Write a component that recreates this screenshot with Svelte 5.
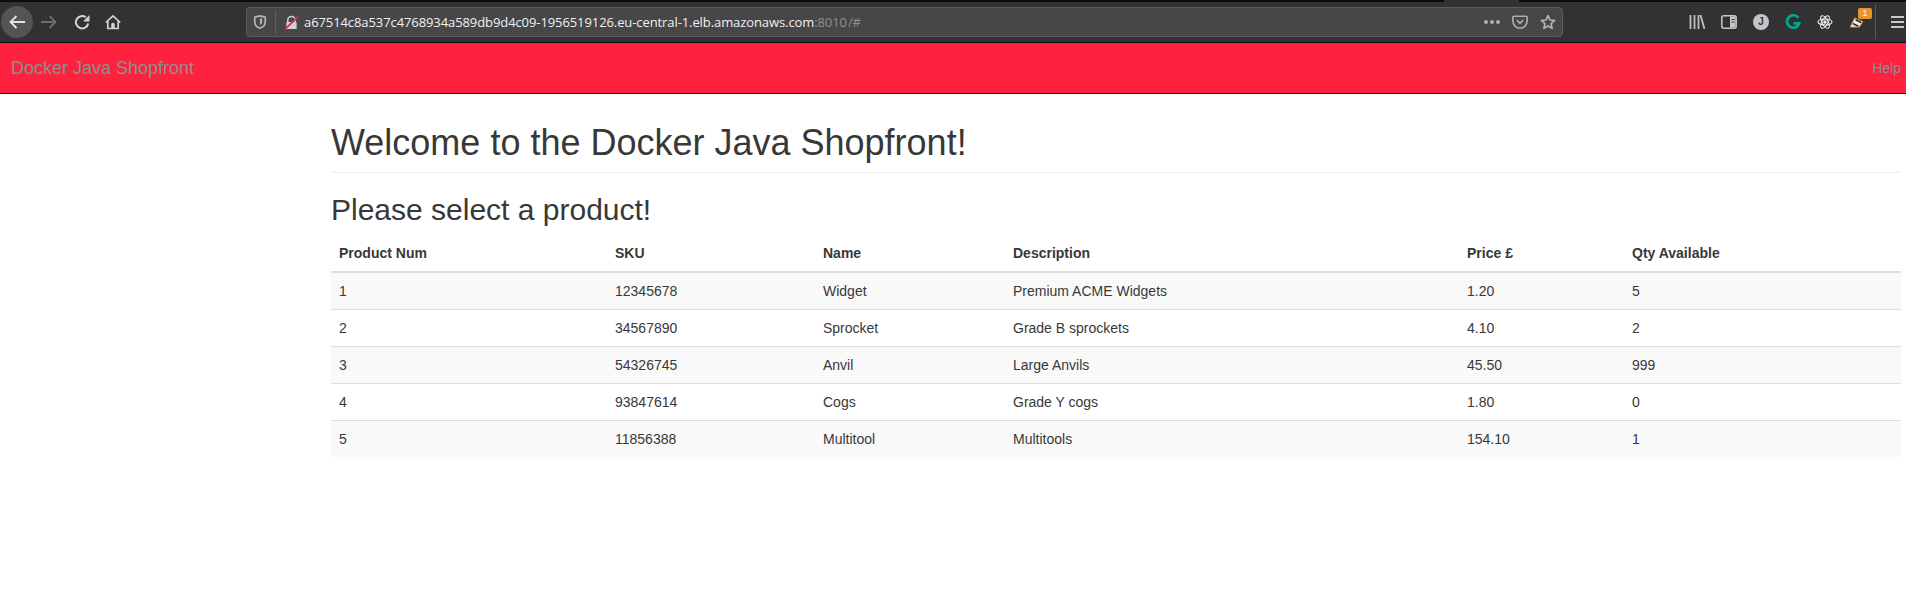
<script>
	const columns = ['Product Num', 'SKU', 'Name', 'Description', 'Price £', 'Qty Available'];
	const products = [
		['1', '12345678', 'Widget', 'Premium ACME Widgets', '1.20', '5'],
		['2', '34567890', 'Sprocket', 'Grade B sprockets', '4.10', '2'],
		['3', '54326745', 'Anvil', 'Large Anvils', '45.50', '999'],
		['4', '93847614', 'Cogs', 'Grade Y cogs', '1.80', '0'],
		['5', '11856388', 'Multitool', 'Multitools', '154.10', '1']
	];
</script>

<div class="toolbar">
	<span class="tab-stub"></span>
	<div class="nav-buttons">
		<span class="back">
			<svg width="16" height="16" viewBox="0 0 16 16"><path d="M7.500 2 1.500 8l6 6M2 8h14" fill="none" stroke="#e6e6e6" stroke-width="1.800" /></svg>
		</span>
		<svg class="forward" width="16" height="16" viewBox="0 0 16 16"><path d="M8.500 2l6 6-6 6M14 8H0" fill="none" stroke="#6e6e70" stroke-width="1.800" /></svg>
		<svg class="reload" width="16" height="16" viewBox="0 0 16 16"><path d="M14.200 9.500A6.200 6.200 0 1 1 11.800 3.200" fill="none" stroke="#d4d4d6" stroke-width="2" /><path d="M15.500 1v6.500H9z" fill="#d4d4d6" /></svg>
		<svg class="home" width="16" height="16" viewBox="0 0 16 16"><path d="M.8 8.500 8 1.800l7.200 6.700M2.800 7v7.500h10.400V7" fill="none" stroke="#d4d4d6" stroke-width="1.700" /><path d="M6.200 14.500V10.500a1.800 1.800 0 0 1 3.600 0v4z" fill="#d4d4d6" /></svg>
	</div>
	<div class="urlbar">
		<svg class="shield" width="14" height="14" viewBox="0 0 16 16"><path d="M2 2.500 8 1l6 1.500V8c0 3.500-3 6-6 7-3-1-6-3.500-6-7z" fill="none" stroke="#b4b4b6" stroke-width="2" /><path d="M8 4h2.500v4c0 1.500-1.200 2.800-2.500 3.300z" fill="#b4b4b6" /></svg>
		<span class="divider"></span>
		<svg class="lock" width="15" height="15" viewBox="0 0 16 16"><path d="M4 8V5.500a4 4 0 0 1 8 0V8" fill="none" stroke="#d0d0d2" stroke-width="1.600" /><rect x="2.500" y="7.500" width="11" height="7.500" rx="1" fill="#d0d0d2" /><path d="M1 15 15 2" stroke="#e22850" stroke-width="2" /></svg>
		<span class="url">a67514c8a537c4768934a589db9d4c09-1956519126.eu-central-1.elb.amazonaws.com<span class="dim">:8010</span><span class="dim path">/#</span></span>
		<span class="dots"><i></i><i></i><i></i></span>
		<svg class="pocket" width="16" height="16" viewBox="0 0 18 18"><path d="M2 2.500h14a1 1 0 0 1 1 1V8a8 8 0 0 1-16 0V3.500a1 1 0 0 1 1-1z" fill="none" stroke="#aeaeb0" stroke-width="1.800" /><path d="M5.500 7 9 10.500 12.500 7" fill="none" stroke="#aeaeb0" stroke-width="2" /></svg>
		<svg class="star" width="16" height="16" viewBox="0 0 18 18"><path d="M9 1.800 11.200 6.700l5.300.6-4 3.600 1.100 5.300L9 13.500l-4.600 2.700 1.100-5.300-4-3.600 5.300-.6z" fill="none" stroke="#b8b8ba" stroke-width="1.800" stroke-linejoin="round" /></svg>
	</div>
	<div class="extras">
		<svg width="16" height="16" viewBox="0 0 16 16"><path d="M1.500 1v14M5.500 1v14M9.500 1v14M11.500 1l4 14" fill="none" stroke="#c0c0c2" stroke-width="1.800" /></svg>
		<svg width="16" height="16" viewBox="0 0 16 16"><rect x=".8" y="1.800" width="14.400" height="12.400" rx="2" fill="none" stroke="#c8c8ca" stroke-width="1.500" /><rect x="9" y="2.500" width="5.500" height="11" fill="#c8c8ca" /><path d="M10.500 5.500h3M10.500 8h3" stroke="#323234" stroke-width="1" /></svg>
		<span class="avatar">J</span>
		<svg width="16" height="16" viewBox="0 0 18 18"><path d="M15 4.300A7 7 0 1 0 16 10.500H9.500" fill="none" stroke="#00a98f" stroke-width="3" /></svg>
		<svg width="16" height="16" viewBox="0 0 16 16" fill="none" stroke="#e8e8e8" stroke-width="1.200"><ellipse cx="8" cy="8" rx="7" ry="3" /><ellipse cx="8" cy="8" rx="7" ry="3" transform="rotate(60 8 8)" /><ellipse cx="8" cy="8" rx="7" ry="3" transform="rotate(120 8 8)" /><circle cx="8" cy="8" r="1.200" fill="#e8e8e8" /></svg>
		<span class="badger">
			<svg width="16" height="14" viewBox="0 0 17 15"><path d="M1 13 6 3l9 4-4 6z" fill="#f2efe9" stroke="#c46a2a" stroke-width="1" /><path d="M4 9l6 3M7 5l6 3" stroke="#2c2c2c" stroke-width="1.800" /></svg>
			<span class="badge">1</span>
		</span>
		<span class="sep"></span>
		<svg width="13" height="12" viewBox="0 0 13 12"><path d="M0 1h13M0 6h13M0 11h13" stroke="#c8c8ca" stroke-width="2" /></svg>
	</div>
</div>

<nav class="navbar">
	<a class="brand" href="#top">Docker Java Shopfront</a>
	<a class="help" href="#top">Help</a>
</nav>

<main class="content">
	<h1>Welcome to the Docker Java Shopfront!</h1>
	<h2>Please select a product!</h2>
	<table>
		<thead>
			<tr>
				{#each columns as col}
					<th>{col}</th>
				{/each}
			</tr>
		</thead>
		<tbody>
			{#each products as row}
				<tr>
					{#each row as cell}
						<td>{cell}</td>
					{/each}
				</tr>
			{/each}
		</tbody>
	</table>
</main>

<style>
	:global(body) {
		margin: 0;
		background: #fff;
		font-family: 'Liberation Sans', Arial, sans-serif;
		font-size: 14px;
		line-height: 20px;
		color: #383838;
	}

	.toolbar {
		position: relative;
		display: flex;
		align-items: center;
		height: 40px;
		background: #323234;
		border-top: 2px solid #0c0c0d;
		border-bottom: 1px solid #0c0c0d;
	}

	/* bottom of the tab strip, peeking over the dark top edge */
	.tab-stub {
		position: absolute;
		top: -2px;
		left: 1444px;
		width: 75px;
		height: 2px;
		background: #323234;
	}

	.nav-buttons {
		display: flex;
		align-items: center;
		width: 246px;
		flex: none;
	}

	.back {
		display: flex;
		align-items: center;
		justify-content: center;
		width: 32px;
		height: 32px;
		margin-left: 1px;
		border-radius: 50%;
		background: #545456;
	}

	.forward {
		margin-left: 8px;
	}

	.reload {
		margin-left: 17px;
	}

	.home {
		margin-left: 15px;
	}

	.urlbar {
		display: flex;
		align-items: center;
		width: 1317px;
		height: 30px;
		box-sizing: border-box;
		flex: none;
		background: #474749;
		border: 1px solid #5c5c5e;
		border-radius: 4px;
		font-family: 'Open Sans', sans-serif;
		font-size: 13px;
		letter-spacing: -0.09px;
		color: #f0f0f0;
	}

	.shield {
		margin-left: 6px;
	}

	.divider {
		width: 1px;
		height: 24px;
		margin: 0 8px;
		background: #5e5e60;
	}

	.url {
		margin-left: 5px;
		flex: 1;
		white-space: nowrap;
	}

	.dim {
		color: #8f8f91;
	}

	.path {
		margin-left: 1px;
	}

	.dots {
		display: flex;
		gap: 2px;
		margin-right: 12px;
	}

	.dots i {
		width: 4px;
		height: 4px;
		border-radius: 50%;
		background: #b0b0b2;
	}

	.pocket {
		margin-right: 12px;
	}

	.star {
		margin-right: 6px;
	}

	.extras {
		display: flex;
		align-items: center;
		gap: 16px;
		margin-left: 126px;
	}

	.avatar {
		display: flex;
		align-items: center;
		justify-content: center;
		width: 16px;
		height: 16px;
		border-radius: 50%;
		background: #c4c4c6;
		color: #323234;
		font-size: 10px;
		font-weight: 700;
	}

	.badger {
		position: relative;
		display: flex;
	}

	.badge {
		position: absolute;
		top: -7px;
		left: 9px;
		width: 14px;
		height: 11px;
		border-radius: 2px;
		background: #e8962a;
		color: #fff;
		font-size: 9px;
		line-height: 11px;
		text-align: center;
	}

	.sep {
		width: 1px;
		height: 34px;
		margin: 0 -1px 0 -6px;
		background: #5a5a5c;
	}

	.navbar {
		display: flex;
		justify-content: space-between;
		align-items: center;
		height: 50px;
		padding: 0 5px 0 11px;
		background: #ff223e;
		border-bottom: 1px solid #080808;
	}

	.brand {
		font-size: 18px;
		color: #8e8e8e;
		text-decoration: none;
	}

	.help {
		font-size: 14px;
		color: #8e8e8e;
		text-decoration: none;
	}

	.content {
		margin-left: 331px;
		margin-right: 5px;
	}

	h1 {
		margin: 0 0 20px;
		padding: 29px 0 9px;
		border-bottom: 1px solid #eee;
		font-size: 36px;
		font-weight: 500;
		line-height: 40px;
	}

	h2 {
		margin: 0 0 9px;
		font-size: 30px;
		font-weight: 500;
		line-height: 33px;
	}

	table {
		width: 100%;
		border-collapse: collapse;
		table-layout: fixed;
	}

	th,
	td {
		box-sizing: border-box;
		padding: 8px;
		text-align: left;
		line-height: 20px;
	}

	th {
		font-weight: 700;
		border-bottom: 2px solid #ddd;
	}

	td {
		border-top: 1px solid #ddd;
	}

	tbody tr:first-child td {
		border-top: 0;
	}

	tbody tr:nth-child(odd) {
		background: #f9f9f9;
	}

	th:nth-child(1) { width: 276px; }
	th:nth-child(2) { width: 208px; }
	th:nth-child(3) { width: 190px; }
	th:nth-child(4) { width: 454px; }
	th:nth-child(5) { width: 165px; }
</style>
